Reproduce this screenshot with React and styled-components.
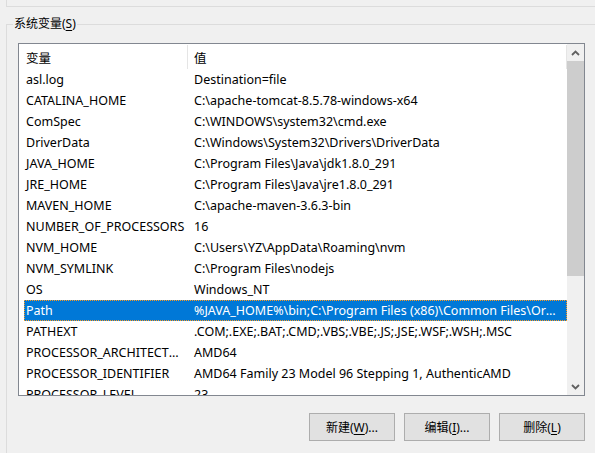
import React from 'react'
import styled, { createGlobalStyle } from 'styled-components'

const GlobalStyle = createGlobalStyle`
  html, body {
    margin: 0;
    padding: 0;
    background: #f0f0f0;
  }
  body {
    font-family: "Noto Sans", "Noto Sans CJK SC", sans-serif;
    font-size: 12.5px;
    color: #000;
  }
`

const vars = [
  ['asl.log', 'Destination=file'],
  ['CATALINA_HOME', 'C:\\apache-tomcat-8.5.78-windows-x64'],
  ['ComSpec', 'C:\\WINDOWS\\system32\\cmd.exe'],
  ['DriverData', 'C:\\Windows\\System32\\Drivers\\DriverData'],
  ['JAVA_HOME', 'C:\\Program Files\\Java\\jdk1.8.0_291'],
  ['JRE_HOME', 'C:\\Program Files\\Java\\jre1.8.0_291'],
  ['MAVEN_HOME', 'C:\\apache-maven-3.6.3-bin'],
  ['NUMBER_OF_PROCESSORS', '16'],
  ['NVM_HOME', 'C:\\Users\\YZ\\AppData\\Roaming\\nvm'],
  ['NVM_SYMLINK', 'C:\\Program Files\\nodejs'],
  ['OS', 'Windows_NT'],
  ['Path', '%JAVA_HOME%\\bin;C:\\Program Files (x86)\\Common Files\\Oracle\\Java\\javapath;C:\\WINDOWS\\system32'],
  ['PATHEXT', '.COM;.EXE;.BAT;.CMD;.VBS;.VBE;.JS;.JSE;.WSF;.WSH;.MSC'],
  ['PROCESSOR_ARCHITECTURE', 'AMD64'],
  ['PROCESSOR_IDENTIFIER', 'AMD64 Family 23 Model 96 Stepping 1, AuthenticAMD'],
  ['PROCESSOR_LEVEL', '23'],
]

const Page = styled.div`
  width: 595px;
  height: 453px;
  overflow: hidden;
`

const PrevGroup = styled.div`
  margin-left: 6px;
  height: 6px;
  border-left: 1px solid #dcdcdc;
  border-bottom: 1px solid #dcdcdc;
`

const Group = styled.fieldset`
  margin: 9px 0 0 6px;
  padding: 11px 0 0 11px;
  border: 1px solid #dcdcdc;
  border-right: none;
  min-width: 0;
  height: 460px;
  box-sizing: border-box;
`

const Legend = styled.legend`
  margin-left: -5px;
  padding: 0 1px;
  line-height: 16px;
  font-size: 12px;
`

const Key = styled.span`
  text-decoration: underline;
  text-underline-offset: 2px;
`

const ListBox = styled.div`
  width: 567px;
  height: 353px;
  box-sizing: border-box;
  border: 1px solid #828790;
  background: #fff;
  display: grid;
  grid-template-columns: 1fr 17px;
  overflow: hidden;
`

const ListArea = styled.div`
  overflow: hidden;
  padding-left: 5px;
`

const Header = styled.div`
  display: grid;
  grid-template-columns: 164px 1fr;
  height: 25px;
  margin-left: -5px;
  padding-left: 5px;
`

const HeadCell = styled.div`
  display: flex;
  align-items: center;
  padding-left: ${p => (p.$first ? '2px' : '6px')};
  border-right: 1px solid #e5e5e5;
  margin: 1px 0 0;
  box-sizing: border-box;
`

const Row = styled.div`
  display: grid;
  grid-template-columns: 164px 1fr;
  height: 21px;
  align-items: center;
  background: ${p => (p.$selected ? '#0078d7' : 'transparent')};
  color: ${p => (p.$selected ? '#fff' : '#000')};
  outline: ${p => (p.$selected ? '1px dotted #ff9a1f' : 'none')};
  outline-offset: -1px;
`

const Cell = styled.div`
  padding-left: ${p => (p.$first ? '2px' : '6px')};
  padding-right: ${p => (p.$first ? '2px' : '6px')};
  white-space: nowrap;
  overflow: hidden;
  text-overflow: ellipsis;
`

const ScrollBar = styled.div`
  background: #f0f0f0;
  display: flex;
  flex-direction: column;
`

const ArrowButton = styled.div`
  height: 17px;
  display: flex;
  align-items: center;
  justify-content: center;
  color: #606060;
`

const Track = styled.div`
  flex: 1;
  display: flex;
  flex-direction: column;
`

const Thumb = styled.div`
  height: 215px;
  background: #cdcdcd;
`

const Buttons = styled.div`
  display: flex;
  justify-content: flex-end;
  gap: 9px;
  width: 567px;
  margin-top: 17px;
`

const Button = styled.button`
  width: 86px;
  height: 28px;
  border: 1px solid #adadad;
  background: #e1e1e1;
  font: inherit;
  font-size: 12px;
  color: #000;
  padding: 0;
`

const Chevron = ({ up }) => (
  <svg width="9" height="6" viewBox="0 0 9 6">
    <path
      d={up ? 'M1 5 L4.5 1.5 L8 5' : 'M1 1 L4.5 4.5 L8 1'}
      fill="none"
      stroke="currentColor"
      strokeWidth="1.8"
    />
  </svg>
)

export default function App() {
  return (
    <Page>
      <GlobalStyle />
      <PrevGroup />
      <Group>
        <Legend>
          系统变量(<Key>S</Key>)
        </Legend>
        <ListBox>
          <ListArea>
            <Header>
              <HeadCell $first>变量</HeadCell>
              <HeadCell>值</HeadCell>
            </Header>
            {vars.map(([name, value]) => (
              <Row key={name} $selected={name === 'Path'}>
                <Cell $first>{name}</Cell>
                <Cell>{value}</Cell>
              </Row>
            ))}
          </ListArea>
          <ScrollBar>
            <ArrowButton>
              <Chevron up />
            </ArrowButton>
            <Track>
              <Thumb />
            </Track>
            <ArrowButton>
              <Chevron />
            </ArrowButton>
          </ScrollBar>
        </ListBox>
        <Buttons>
          <Button>
            新建(<Key>W</Key>)...
          </Button>
          <Button>
            编辑(<Key>I</Key>)...
          </Button>
          <Button>
            删除(<Key>L</Key>)
          </Button>
        </Buttons>
      </Group>
    </Page>
  )
}
